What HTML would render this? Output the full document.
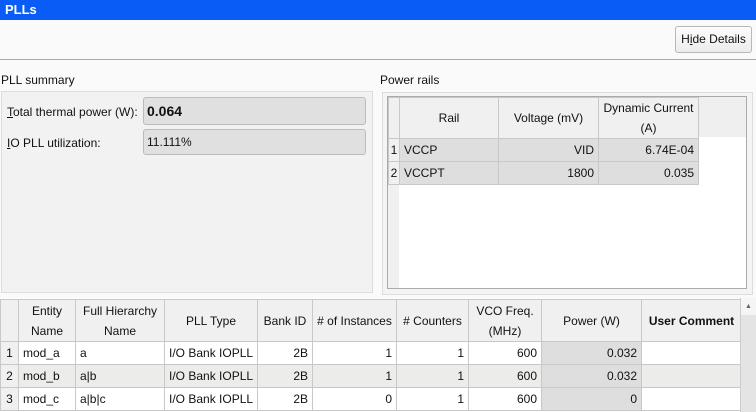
<!DOCTYPE html>
<html><head><style>
*{box-sizing:border-box;margin:0;padding:0}
body{width:756px;height:412px;overflow:hidden;background:#fafafa;font-family:"Liberation Sans",sans-serif;font-size:12px;color:#111;position:relative}
.a{position:absolute}
table{border-collapse:collapse;position:absolute;table-layout:fixed}
td,th{border:1px solid #c8c8c8;height:23px;padding:0 4px;white-space:nowrap;overflow:hidden;font-weight:normal}
th{background:#f0f0f0;text-align:center;line-height:20px}
.r{text-align:right}.n{background:#f0f0f0;text-align:center;padding:0}
.g{background:#dedede}
</style></head><body>
<div class="a" style="left:0;top:0;width:756px;height:20px;background:#0a5cf6;color:#fff;font-weight:bold;font-size:13px;padding:2px 5px">PLLs</div>
<div class="a" style="left:675px;top:26px;width:77px;height:27px;border:1px solid #b8b8b8;border-radius:3px;background:linear-gradient(#fdfdfd,#ececec);text-align:center;line-height:25px">H<u>i</u>de Details</div>
<div class="a" style="left:0;top:59px;width:756px;height:1px;background:#aaa"></div>
<div class="a" style="left:1px;top:73px">PLL summary</div>
<div class="a" style="left:1px;top:91px;width:372px;height:202px;border:1px solid #ddd;background:#f2f2f2"></div>
<div class="a" style="left:7px;top:105px"><u>T</u>otal thermal power (W):</div>
<div class="a" style="left:143px;top:97px;width:223px;height:28px;border:1px solid #bbb;border-radius:3px;background:#e0e0e0;font-weight:bold;font-size:14px;padding:5px 3px">0.064</div>
<div class="a" style="left:7px;top:136px"><u>I</u>O PLL utilization:</div>
<div class="a" style="left:143px;top:129px;width:223px;height:26px;border:1px solid #bbb;border-radius:3px;background:#e0e0e0;padding:5px 3px">11.111%</div>
<div class="a" style="left:380px;top:73px">Power rails</div>
<div class="a" style="left:382px;top:92px;width:371px;height:203px;border:1px solid #ddd;background:#f4f4f4"></div>
<div class="a" style="left:387px;top:96px;width:360px;height:193px;border:1px solid #aaa;background:#fff"></div>
<div class="a" style="left:388px;top:97px;width:358px;height:40px;background:#efefef"></div>
<div class="a" style="left:388px;top:137px;width:11px;height:151px;background:#f0f0f0"></div>
<table style="left:388px;top:97px;width:310px">
<col style="width:11px"><col style="width:99px"><col style="width:100px"><col style="width:100px">
<tr><th style="height:40px" class="n"></th><th>Rail</th><th>Voltage (mV)</th><th>Dynamic Current<br>(A)</th></tr>
<tr class="g"><td class="n">1</td><td class="g">VCCP</td><td class="r g">VID</td><td class="r g">6.74E-04</td></tr>
<tr><td class="n">2</td><td class="g">VCCPT</td><td class="r g">1800</td><td class="r g">0.035</td></tr>
</table>
<div class="a" style="left:0;top:298px;width:740px;height:114px;background:#fff"></div>
<table style="left:0;top:299px;width:741px">
<col style="width:18px"><col style="width:57px"><col style="width:89px"><col style="width:93px"><col style="width:55px"><col style="width:84px"><col style="width:72px"><col style="width:73px"><col style="width:100px"><col style="width:100px">
<tr><th class="n" style="height:42px"></th><th>Entity<br>Name</th><th>Full Hierarchy<br>Name</th><th>PLL Type</th><th>Bank ID</th><th># of Instances</th><th># Counters</th><th>VCO Freq.<br>(MHz)</th><th>Power (W)</th><th style="font-weight:bold">User Comment</th></tr>
<tr><td class="n">1</td><td>mod_a</td><td>a</td><td class="r">I/O Bank IOPLL</td><td class="r">2B</td><td class="r">1</td><td class="r">1</td><td class="r">600</td><td class="r g">0.032</td><td></td></tr>
<tr style="background:#ececea"><td class="n">2</td><td>mod_b</td><td>a|b</td><td class="r">I/O Bank IOPLL</td><td class="r">2B</td><td class="r">1</td><td class="r">1</td><td class="r">600</td><td class="r g">0.032</td><td></td></tr>
<tr><td class="n">3</td><td>mod_c</td><td>a|b|c</td><td class="r">I/O Bank IOPLL</td><td class="r">2B</td><td class="r">0</td><td class="r">1</td><td class="r">600</td><td class="r g">0</td><td></td></tr>
</table>
<div class="a" style="left:740px;top:298px;width:16px;height:114px;background:#e4e4e4;border-left:1px solid #ccc"></div>
<div class="a" style="left:741px;top:298px;width:15px;height:17px;background:#f5f5f5;font-size:7px;color:#666;text-align:center;line-height:17px">▲</div>
</body></html>
